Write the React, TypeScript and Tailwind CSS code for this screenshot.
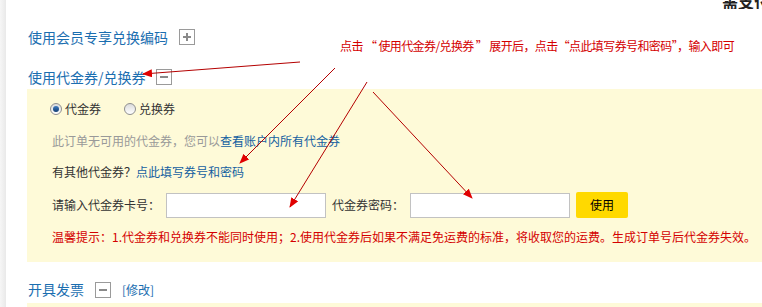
import React from "react";

const FONT = '"Noto Sans CJK SC", "Liberation Sans", sans-serif';

function ToggleBox({ plus }: { plus?: boolean }) {
  return (
    <span className="relative inline-flex w-[16px] h-[16px] border border-[#9a9a9a] bg-white items-center justify-center">
      <span className="absolute w-[8px] h-[2px] bg-[#8a8a8a]" />
      {plus && <span className="absolute w-[2px] h-[8px] bg-[#8a8a8a]" />}
    </span>
  );
}

function Radio({ checked, label }: { checked?: boolean; label: string }) {
  return (
    <label className="flex items-center gap-[3px]">
      <span className="w-[12px] h-[12px] rounded-full border border-[#8f8f8f] bg-gradient-to-b from-[#dcdcdc] to-white flex items-center justify-center">
        {checked && <span className="w-[6px] h-[6px] rounded-full bg-gradient-to-b from-[#3f7cc0] to-[#123e73]" />}
      </span>
      <span className="text-[12px] text-[#333]">{label}</span>
    </label>
  );
}

function Arrows() {
  const lines = [
    [300, 62, 143, 74],
    [335, 68, 240, 163],
    [367, 82, 290, 207],
    [373, 92, 472, 198],
  ];
  return (
    <svg className="absolute inset-0 pointer-events-none" width="762" height="307">
      <defs>
        <marker id="ah" markerWidth="10" markerHeight="8" refX="9" refY="4" orient="auto" markerUnits="userSpaceOnUse">
          <polygon points="0,0 10,4 0,8" fill="#e00000" />
        </marker>
      </defs>
      {lines.map(([x1, y1, x2, y2], i) => (
        <line key={i} x1={x1} y1={y1} x2={x2} y2={y2} stroke="#b40000" strokeWidth="1" markerEnd="url(#ah)" />
      ))}
    </svg>
  );
}

export default function App() {
  return (
    <div className="relative w-[762px] h-[307px] overflow-hidden bg-white flex" style={{ fontFamily: FONT }}>
      <div className="w-[6px] shrink-0 bg-gradient-to-r from-[#f6f6f6] to-[#e9e9e9]" />
      <div className="flex-1 min-w-0 pl-[21px] flex flex-col">
        {/* header text, cut by the top edge like the reference */}
        <div className="h-[9px] overflow-hidden flex items-end pl-[695px]">
          <span className="whitespace-nowrap text-[16px] leading-[16px] font-bold text-[#222]">需支付</span>
        </div>

        <div className="h-[56px] flex items-center gap-[11px] pl-px">
          <span className="text-[14px] text-[#1b6eb0]">使用会员专享兑换编码</span>
          <ToggleBox plus />
        </div>

        <div className="h-[24px] flex items-center gap-[10px] pl-px">
          <span className="text-[14px] text-[#1b6eb0]">使用代金券/兑换券</span>
          <ToggleBox />
        </div>

        {/* voucher panel */}
        <div className="h-[173px] bg-[#fefad8] pl-[25px] pt-[10px] flex flex-col text-[12px]">
          <div className="h-[20px] flex items-center gap-[23px] -ml-[2px]">
            <Radio checked label="代金券" />
            <Radio label="兑换券" />
          </div>
          <div className="h-[20px] mt-[12px] flex items-center">
            <span className="text-[#999]">此订单无可用的代金券，您可以</span>
            <span className="text-[#155fa0]">查看账户内所有代金券</span>
          </div>
          <div className="h-[20px] mt-[11px] flex items-center">
            <span className="text-[#333]">有其他代金券？</span>
            <span className="text-[#155fa0]">点此填写券号和密码</span>
          </div>
          <div className="h-[26px] mt-[10px] flex items-center gap-[6px] text-[#333]">
            <span>请输入代金券卡号：</span>
            <input className="w-[160px] h-[25px] bg-white border border-[#c2c2c2] outline-none" />
            <span>代金券密码：</span>
            <input className="w-[160px] h-[25px] bg-white border border-[#c2c2c2] outline-none" />
            <button className="w-[52px] h-[26px] rounded-[2px] bg-[#ffd900] text-[12px] text-black">使用</button>
          </div>
          <div className="h-[20px] mt-[9px] flex items-center whitespace-nowrap text-[#d40000]">
            温馨提示：1.代金券和兑换券不能同时使用；2.使用代金券后如果不满足免运费的标准，将收取您的运费。生成订单号后代金券失效。
          </div>
        </div>

        <div className="h-[41px] pt-[14px] flex items-center gap-[11px] pl-px">
          <span className="text-[14px] text-[#1b6eb0]">开具发票</span>
          <ToggleBox />
          <span className="text-[12px] text-[#1b6eb0]">[修改]</span>
        </div>

        <div className="flex-1 bg-[#fefad8]" />
      </div>

      <Arrows />
      <div className="absolute left-[340px] top-[38px] text-[12px] leading-[16px] tracking-[-0.6px] text-[#d40000] whitespace-nowrap">
        点击 “ 使用代金券/兑换券 ” 展开后，点击“点此填写券号和密码”，输入即可
      </div>
    </div>
  );
}
